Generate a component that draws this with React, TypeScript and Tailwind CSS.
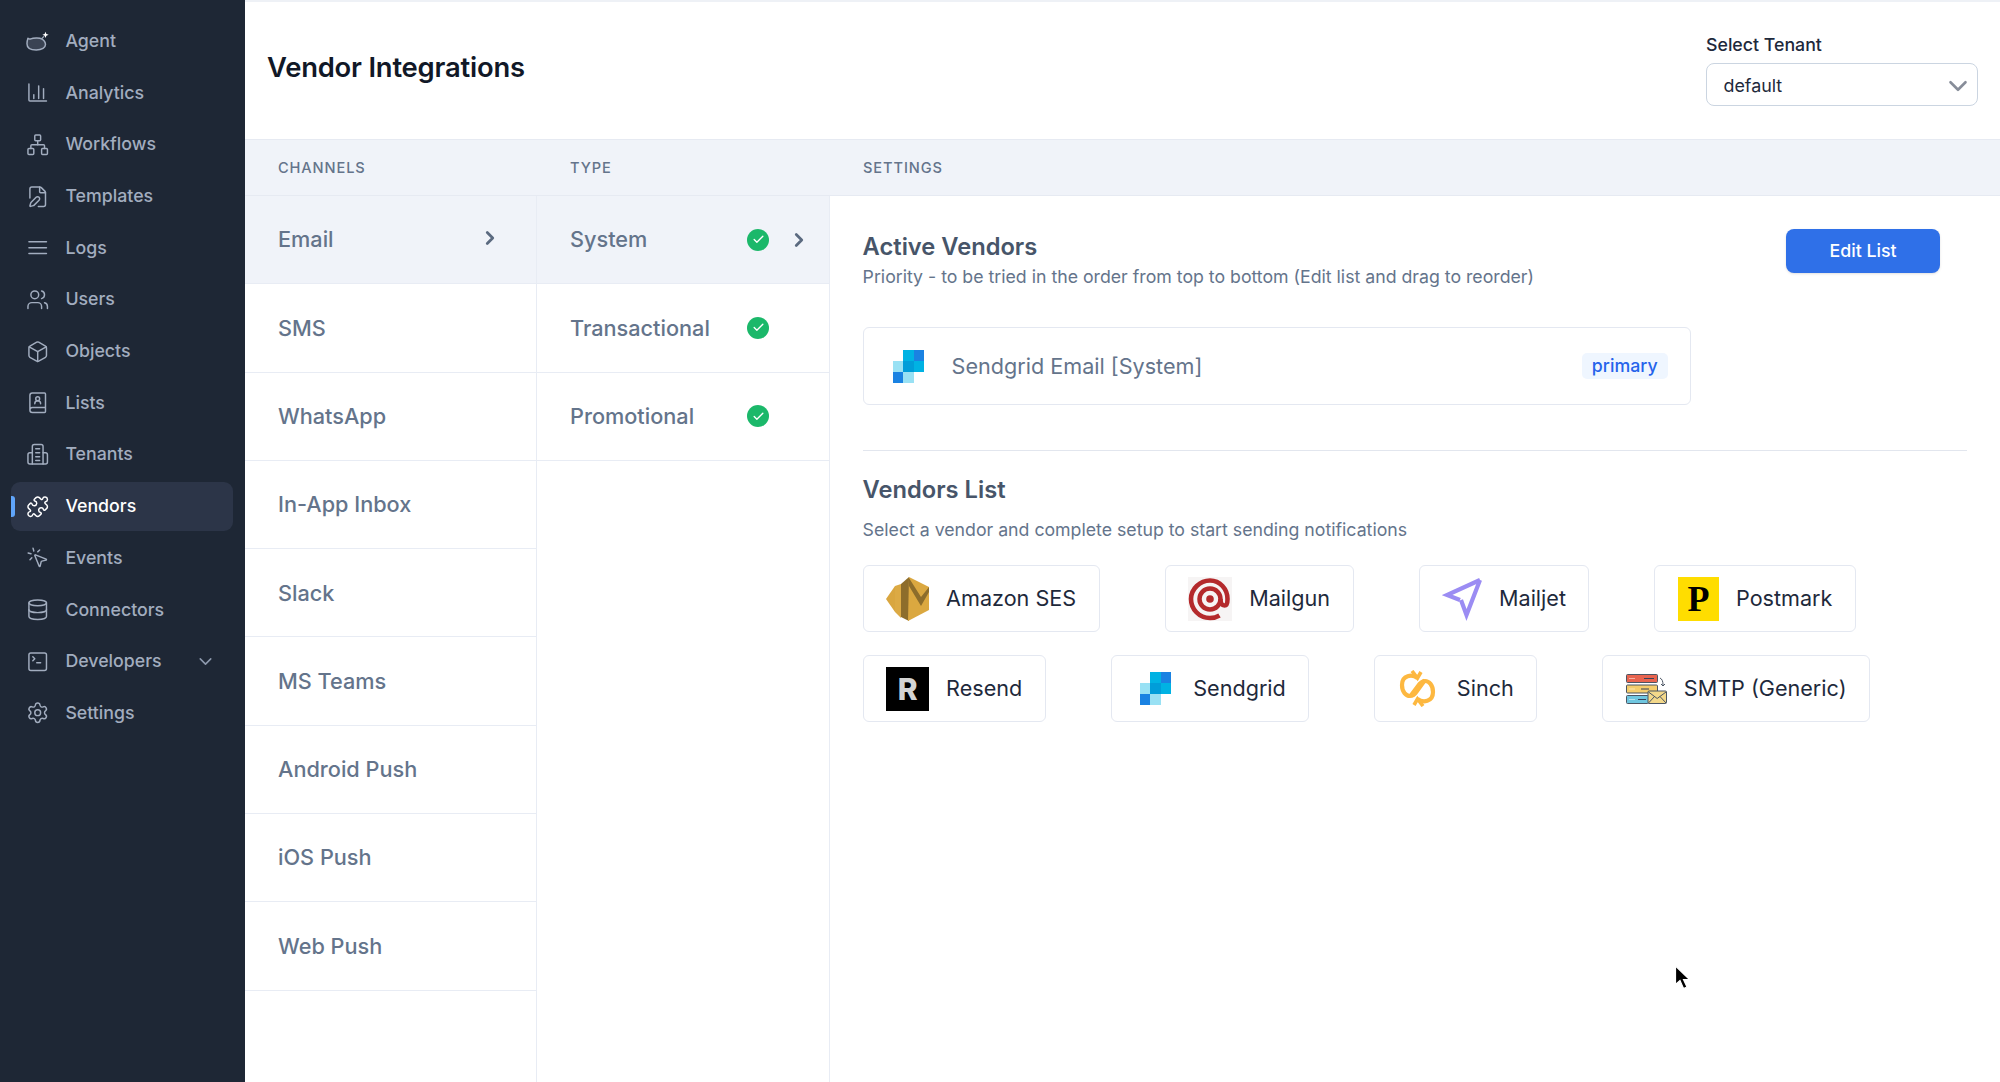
import React from "react";
import {
  Network, FilePen, Users, Box, BookUser, Puzzle, MousePointerClick, Database, SquareTerminal, Settings,
  ChevronRight, ChevronDown, Check,
} from "lucide-react";

const AgentIcon = ({ className }: { className?: string }) => (
  <svg className={className} viewBox="0 0 24 24" fill="none" stroke="currentColor" strokeWidth="1.5" strokeLinejoin="round">
    <path d="M2 8.500c1 1 2 1 3 .6 2-1 9-1.500 11 0 2.500 1.500 4 3.500 4 5.900 0 3-3.500 5.500-9.500 5.500S1 18 1 14c0-2 .5-4 1-5.500z" fill="#3a4353" />
    <path d="M16 9l2.500-2.500" strokeWidth="1.300" />
    <path d="M20 1.800l.9 2.300 2.300.9-2.300.9-.9 2.300-.9-2.300-2.300-.9 2.300-.9z" fill="#fff" stroke="none" />
  </svg>
);
const AnalyticsIcon = ({ className }: { className?: string }) => (
  <svg className={className} viewBox="0 0 24 24" fill="none" stroke="currentColor" strokeWidth="1.5" strokeLinecap="round" strokeLinejoin="round">
    <path d="M3 3v16.500a1 1 0 0 0 1 1h17" /><path d="M8 18v-4" /><path d="M13 18V5" /><path d="M18 18V8" />
  </svg>
);
const LogsIcon = ({ className }: { className?: string }) => (
  <svg className={className} viewBox="0 0 24 24" fill="none" stroke="currentColor" strokeWidth="1.5" strokeLinecap="round">
    <path d="M3 6h18" /><path d="M3 12h18" /><path d="M3 18h18" />
  </svg>
);
const TenantsIcon = ({ className }: { className?: string }) => (
  <svg className={className} viewBox="0 0 24 24" fill="none" stroke="currentColor" strokeWidth="1.5" strokeLinecap="round" strokeLinejoin="round">
    <path d="M6.500 21.500V3.500a2 2 0 0 1 2-2h7a2 2 0 0 1 2 2v18z" />
    <path d="M6.500 10H4a2 2 0 0 0-2 2v7.500a2 2 0 0 0 2 2h2.500" />
    <path d="M17.500 10H20a2 2 0 0 1 2 2v7.500a2 2 0 0 1-2 2h-2.500" />
    <path d="M10 6h4" /><path d="M10 10h4" /><path d="M10 14h4" /><path d="M10 18h4" />
  </svg>
);

const navItems = [
  { label: "Agent", Icon: AgentIcon },
  { label: "Analytics", Icon: AnalyticsIcon },
  { label: "Workflows", Icon: Network },
  { label: "Templates", Icon: FilePen },
  { label: "Logs", Icon: LogsIcon },
  { label: "Users", Icon: Users },
  { label: "Objects", Icon: Box },
  { label: "Lists", Icon: BookUser },
  { label: "Tenants", Icon: TenantsIcon },
  { label: "Vendors", Icon: Puzzle, active: true },
  { label: "Events", Icon: MousePointerClick },
  { label: "Connectors", Icon: Database },
  { label: "Developers", Icon: SquareTerminal, caret: true },
  { label: "Settings", Icon: Settings },
];

const SendgridMark = () => (
  <svg className="h-[33px] w-[31px] shrink-0" viewBox="0 0 30 32" shapeRendering="crispEdges">
    <rect x="10" y="0" width="10" height="11" fill="#00b2e3" />
    <rect x="20" y="0" width="10" height="11" fill="#1a82e2" />
    <rect x="0" y="11" width="10" height="10.500" fill="#99e1f4" />
    <rect x="10" y="11" width="10" height="10.500" fill="#009dd9" />
    <rect x="20" y="11" width="10" height="10.500" fill="#00b2e3" />
    <rect x="0" y="21.500" width="10" height="10.500" fill="#1a82e2" />
    <rect x="10" y="21.500" width="10" height="10.500" fill="#99e1f4" />
  </svg>
);

const Sendgrid = () => (
  <div className="flex h-[44px] w-[42px] items-center justify-center">
    <SendgridMark />
  </div>
);

const Amazon = () => (
  <svg className="h-[44px] w-[43px]" viewBox="0 0 43 44">
    <polygon points="0,22 9,9 9,35" fill="#d9a63f" />
    <polygon points="9,9 15,7 15,41 9,35" fill="#dcaa44" />
    <polygon points="15,7 23,0 23,44 15,40" fill="#8d6d2b" />
    <polygon points="23,0 43,10 43,33 22,44" fill="#dba840" />
    <polygon points="23,1 35,20 43,10 43,15 35,29 23,9" fill="#8d6d2b" />
  </svg>
);

const Mailgun = () => (
  <svg className="h-[44px] w-[44px] bg-[#f6f4f4]" viewBox="0 0 44 44" fill="none" stroke="#b42a2c">
    <circle cx="22" cy="22" r="3.800" fill="#b42a2c" stroke="none" />
    <circle cx="22" cy="22" r="10.500" strokeWidth="4.500" />
    <path d="M32.500 22c0 4 1.600 6.500 4 6.500s3-3 3-6.500C39.500 12 32 3.500 22 3.500S3 12 3 22s8 19 19 19c4 0 7-1 9.500-2.500" strokeWidth="4.600" />
  </svg>
);

const Mailjet = () => (
  <svg className="h-[44px] w-[40px]" viewBox="0 0 40 44" fill="none" stroke="#9b8cf3" strokeWidth="4.200">
    <path d="M38 3L5 18l13 5" />
    <path d="M38 3L24.500 38 19 23" />
  </svg>
);

const Postmark = () => (
  <div className="flex h-[44px] w-[41px] items-center justify-center bg-[#ffdd00] font-['Liberation_Serif',serif] text-[36px] leading-none font-bold text-black">
    P
  </div>
);

const Resend = () => (
  <div className="flex h-[44px] w-[43px] items-center justify-center bg-black font-[Inter,sans-serif] text-[30px] leading-none font-extrabold text-[#d4d4d4]">
    R
  </div>
);

const Sinch = () => (
  <svg className="h-[37px] w-[42px]" viewBox="-2 0 42 37" fill="none" stroke="#fdb840" strokeWidth="4.200">
    <path d="M17.500 8C12 4 2 5 2 15c0 7 4 11 8 11 3 0 5-2 7-5l8-11" />
    <path d="M17.500 29c5.500 4 15.500 3 15.500-7 0-7-4-11-8-11-3 0-5 2-7 5l-7.500 10" />
    <path d="M12 1l5.500 7L21 2" strokeWidth="3.600" />
    <path d="M23 36l-5.500-7L14 35" strokeWidth="3.600" />
  </svg>
);

const Smtp = () => (
  <svg className="h-[30px] w-[41px]" viewBox="0 0 41 30" stroke="#4b5563" strokeWidth="1">
    <rect x=".5" y=".5" width="31" height="8" rx="1" fill="#e8644f" />
    <rect x=".5" y="11" width="31" height="8" rx="1" fill="#f5cd6b" />
    <rect x=".5" y="21.500" width="22" height="8" rx="1" fill="#6fc6df" />
    <path d="M18 4.500h10M15 15h8M12 25.500h8" stroke="#37415a" strokeWidth="1.200" />
    <path d="M3.500 4.500h5M3.500 15h5M3.500 25.500h5" stroke="#fff" strokeWidth="1" strokeDasharray="1 1" />
    <path d="M34 4c2 1 3 3 3 7" fill="none" strokeWidth="1" />
    <path d="M35 10l2 2 2-2" fill="none" strokeWidth="1" />
    <rect x="22" y="17" width="18.500" height="12.500" rx="1" fill="#f3d88a" />
    <path d="M22.500 18l8.700 6.500 8.800-6.500M22.500 29l6-6.500M40 29l-6-6.500" fill="none" />
  </svg>
);

const vendors = [
  { name: "Amazon SES", Logo: Amazon },
  { name: "Mailgun", Logo: Mailgun },
  { name: "Mailjet", Logo: Mailjet },
  { name: "Postmark", Logo: Postmark },
  { name: "Resend", Logo: Resend },
  { name: "Sendgrid", Logo: Sendgrid },
  { name: "Sinch", Logo: Sinch },
  { name: "SMTP (Generic)", Logo: Smtp },
];

const channels = ["Email", "SMS", "WhatsApp", "In-App Inbox", "Slack", "MS Teams", "Android Push", "iOS Push", "Web Push"];
const types = ["System", "Transactional", "Promotional"];

const GreenCheck = () => (
  <span className="flex h-[22px] w-[22px] items-center justify-center rounded-full bg-[#1bb86a]">
    <Check className="h-[13px] w-[13px] text-white" strokeWidth={2.5} />
  </span>
);

export default function App() {
  return (
    <div className="relative flex h-[1082px] w-[2000px] overflow-hidden bg-white font-[Inter,sans-serif]">
      <aside className="flex w-[245px] shrink-0 flex-col gap-[3.2px] bg-[#1e2735] pt-[17px] pr-[12px] pb-[17px] pl-[11px]">
        {navItems.map(({ label, Icon, active, caret }) => (
          <div
            key={label}
            className={
              active
                ? "relative flex h-[48.5px] shrink-0 items-center gap-[15.7px] rounded-[9px] bg-[#2c3548] pl-[15.3px] text-[17.75px] font-medium text-white"
                : "flex h-[48.5px] shrink-0 items-center gap-[15.7px] rounded-[9px] pl-[15.3px] text-[17.75px] font-medium text-[#a2adbf]"
            }
          >
            {active && <span className="absolute top-[14px] left-0 h-[21px] w-[4px] rounded-r-[3px] bg-[#60a5fa]" />}
            <Icon className="h-[23.4px] w-[23.4px] shrink-0" strokeWidth={1.5} />
            <span>{label}</span>
            {caret && <ChevronDown className="mr-[17px] ml-auto h-[21px] w-[21px] text-[#8d99ad]" strokeWidth={1.8} />}
          </div>
        ))}
      </aside>

      <main className="flex min-w-0 flex-1 flex-col border-t-2 border-[#eef1f6]">
        <header className="flex h-[137px] shrink-0 justify-between pr-[22px] pl-[22px]">
          <h1 className="mt-[46px] text-[27.4px] leading-[38px] font-semibold tracking-[-0.2px] text-[#111827]">Vendor Integrations</h1>
          <div className="mt-[31px] w-[272px]">
            <div className="text-[17.75px] leading-[23px] font-medium text-[#1e293b]">Select Tenant</div>
            <div className="mt-[7px] flex h-[43px] items-center justify-between rounded-[8px] border border-[#cbd5e1] pt-[3px] pr-[4px] pl-[16.5px] text-[17.86px] text-[#1e293b]">
              <span>default</span>
              <ChevronDown className="h-[30px] w-[30px] text-[#878d99]" strokeWidth={2.1} />
            </div>
          </div>
        </header>

        <div className="flex h-[57px] shrink-0 items-center border-y border-[#e6eaf2] bg-[#f0f3f9] pt-[2px] text-[14.6px] font-medium tracking-[0.9px] text-[#64748b]">
          <div className="w-[292px] pl-[33px]">CHANNELS</div>
          <div className="w-[293px] pl-[33px]">TYPE</div>
          <div className="pl-[33px]">SETTINGS</div>
        </div>

        <div className="flex min-h-0 flex-1">
          <div className="w-[292px] shrink-0 border-r border-[#e8ecf4]">
            {channels.map((c, i) => (
              <div
                key={c}
                className={
                  i === 0
                    ? "flex h-[88.3px] items-center justify-between border-b border-[#e8ecf4] bg-[#f0f3f9] pr-[35px] pl-[33px] text-[21.7px] font-medium text-[#64748b]"
                    : "flex h-[88.3px] items-center justify-between border-b border-[#e8ecf4] pr-[35px] pl-[33px] text-[21.7px] font-medium text-[#64748b]"
                }
              >
                <span>{c}</span>
                {i === 0 && <ChevronRight className="mb-[3px] h-[22px] w-[22px] text-[#5b6a80]" strokeWidth={3} />}
              </div>
            ))}
          </div>
          <div className="w-[293px] shrink-0 border-r border-[#e8ecf4]">
            {types.map((t, i) => (
              <div
                key={t}
                className={
                  i === 0
                    ? "flex h-[88.3px] items-center border-b border-[#e8ecf4] bg-[#f0f3f9] pl-[33px] text-[21.7px] font-medium text-[#64748b]"
                    : "flex h-[88.3px] items-center border-b border-[#e8ecf4] pl-[33px] text-[21.7px] font-medium text-[#64748b]"
                }
              >
                <span className="w-[177px]">{t}</span>
                <GreenCheck />
                {i === 0 && <ChevronRight className="ml-[19px] h-[22px] w-[22px] text-[#5b6a80]" strokeWidth={3} />}
              </div>
            ))}
          </div>

          <section className="min-w-0 flex-1 pt-[33px] pr-[33px] pl-[32.6px]">
            <div className="flex items-start justify-between pr-[27px]">
              <div>
                <h2 className="text-[23.7px] leading-[36px] font-semibold text-[#475569]">Active Vendors</h2>
                <p className="text-[17.72px] leading-[23px] text-[#64748b]">Priority - to be tried in the order from top to bottom (Edit list and drag to reorder)</p>
              </div>
              <button className="h-[44px] w-[154px] rounded-[8px] bg-[#2f70e8] text-[17.75px] font-medium text-white shadow-sm">Edit List</button>
            </div>

            <div className="mt-[39px] flex h-[78px] w-[828px] items-center rounded-[6px] border border-[#e4e8f1] pr-[22px] pl-[29px]">
              <SendgridMark />
              <span className="ml-[28px] flex-1 text-[21.6px] text-[#64748b]">Sendgrid Email [System]</span>
              <span className="flex h-[26px] items-center rounded-[5px] bg-[#eff6ff] px-[10px] text-[17.75px] font-medium text-[#2563eb]">primary</span>
            </div>

            <div className="mt-[45px] h-px bg-[#e2e6ee]" />

            <h2 className="mt-[21px] text-[23.7px] leading-[36px] font-semibold text-[#475569]">Vendors List</h2>
            <p className="mt-[10px] text-[17.72px] leading-[23px] text-[#64748b]">Select a vendor and complete setup to start sending notifications</p>

            <div className="mt-[24px] flex flex-wrap gap-x-[65px] gap-y-[23px]">
              {vendors.map(({ name, Logo }) => (
                <div key={name} className="flex h-[67px] items-center gap-[17px] rounded-[6px] border border-[#e4e8f1] px-[22.5px] text-[21.6px] text-[#1e293b]">
                  <Logo />
                  <span>{name}</span>
                </div>
              ))}
            </div>
          </section>
        </div>
      </main>

      <svg className="absolute top-[965px] left-[1674px] h-[26px] w-[17px]" viewBox="0 0 17 26">
        <path d="M1.500 1v18.500l4.500-4 3.500 8 3.500-1.500-3.500-7.500h6z" fill="#000" stroke="#fff" strokeWidth="1.200" />
      </svg>
    </div>
  );
}
